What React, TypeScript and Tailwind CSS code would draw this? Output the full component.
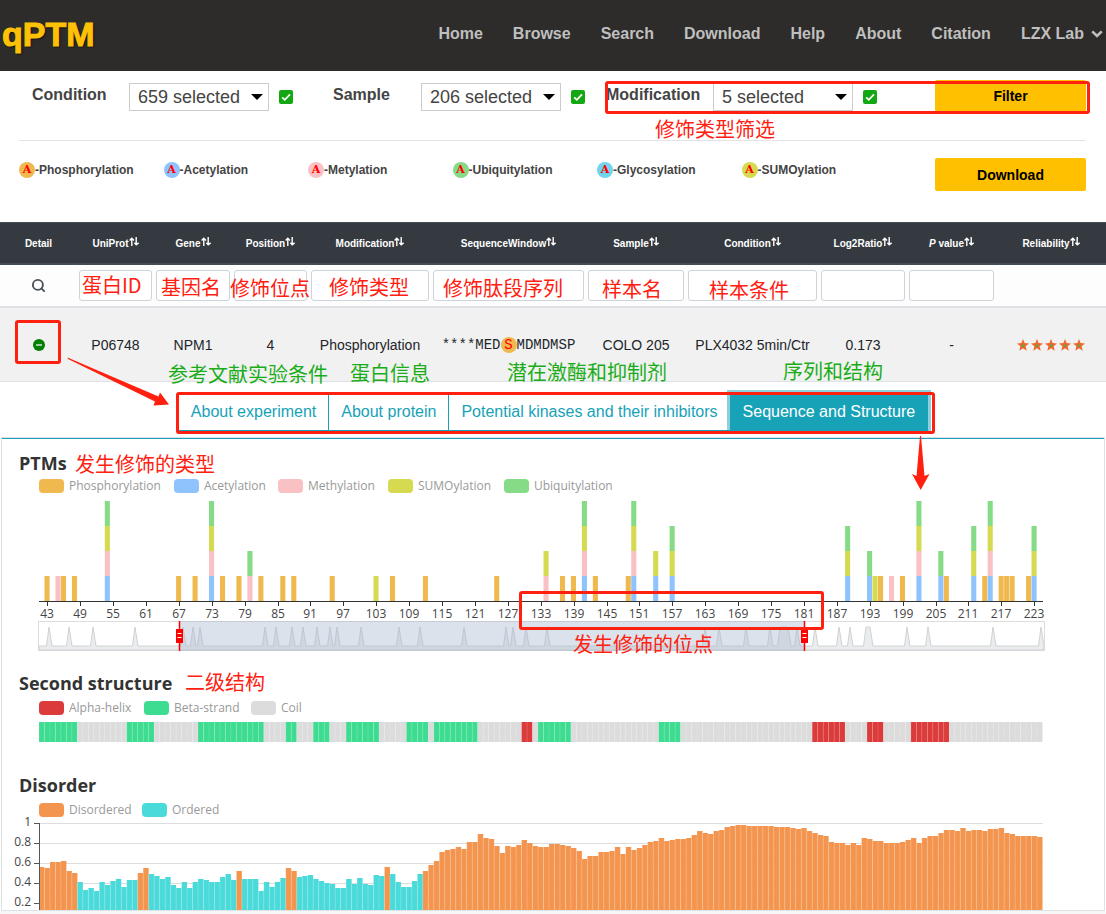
import React, { useState } from "react";
import { Search } from "lucide-react";

const NAV_LINKS = ["Home", "Browse", "Search", "Download", "Help", "About", "Citation"];

const FILTERS = [
    { id: "condition", label: "Condition", value: "659 selected", labelWidth: "w-[97px]" },
    { id: "sample", label: "Sample", value: "206 selected", labelWidth: "w-[88px]" },
    { id: "modification", label: "Modification", value: "5 selected", labelWidth: "w-[107px]" },
];

const BADGES = [
    { name: "Phosphorylation", color: "bg-[#f0b950]" },
    { name: "Acetylation", color: "bg-[#8fc3fd]" },
    { name: "Metylation", color: "bg-[#f9c1c4]" },
    { name: "Ubiquitylation", color: "bg-[#86db87]" },
    { name: "Glycosylation", color: "bg-[#6fd5ee]" },
    { name: "SUMOylation", color: "bg-[#d5da51]" },
];

const COLUMNS = [
    { name: "Detail", width: "w-[77px]", sortable: false, search: false },
    { name: "UniProt", width: "w-[77px]", sortable: true, search: true },
    { name: "Gene", width: "w-[78px]", sortable: true, search: true },
    { name: "Position", width: "w-[77px]", sortable: true, search: true },
    { name: "Modification", width: "w-[122px]", sortable: true, search: true },
    { name: "SequenceWindow", width: "w-[155px]", sortable: true, search: true },
    { name: "Sample", width: "w-[100px]", sortable: true, search: true },
    { name: "Condition", width: "w-[133px]", sortable: true, search: true },
    { name: "Log2Ratio", width: "w-[88px]", sortable: true, search: true },
    { name: "P value", width: "w-[89px]", sortable: true, search: true },
    { name: "Reliability", width: "w-[110px]", sortable: true, search: false },
];

const TABS = ["About experiment", "About protein", "Potential kinases and their inhibitors", "Sequence and Structure"];

const PTM_COLORS: Record<string, string> = {
    P: "#f0b950",
    A: "#8fc3fd",
    M: "#f9c1c4",
    S: "#d5da51",
    U: "#86db87",
};

// residue -> modifications, stacked from the axis upwards
const PTM_SITES: [number, string][] = [
    [43, "P"], [45, "M"], [46, "P"], [48, "P"], [54, "AMSU"], [67, "P"], [70, "P"], [73, "AMSU"],
    [75, "P"], [78, "P"], [80, "MU"], [82, "P"], [86, "P"], [88, "P"], [95, "P"], [103, "S"],
    [106, "P"], [112, "P"], [125, "P"], [134, "MS"], [137, "P"], [139, "P"], [141, "AMSU"],
    [143, "P"], [149, "P"], [150, "AMSU"], [154, "AS"], [157, "ASU"], [189, "ASU"], [193, "AU"],
    [194, "S"], [195, "P"], [197, "M"], [199, "P"], [202, "AMSU"], [206, "AU"], [207, "P"],
    [212, "ASU"], [214, "P"], [215, "AMSU"], [217, "P"], [218, "P"], [219, "P"], [222, "P"], [223, "ASU"],
];

// [center, half width of the flat top] of every peak in the overview strip
const PEAKS: [number, number][] = [
    [10, 0], [30, 0], [54, 0], [96, 0], [144, 0], [154, 0], [161, 0], [226, 0], [237, 0], [253, 0],
    [264, 0], [278, 0], [291, 0], [298, 0], [322, 0], [360, 0], [381, 0], [425, 0], [467, 0], [474, 0],
    [487, 0], [508, 0], [666, 0], [680, 0], [707, 0], [731, 0], [745, 4], [758, 0], [776, 0], [800, 0],
    [811, 0], [829, 2], [868, 0], [889, 0], [954, 0], [1002, 0],
];

// runs of H (helix), E (strand) and C (coil)
const STRUCTURE: [string, number][] = [
    ["E", 7], ["C", 9], ["E", 5], ["C", 8], ["E", 12], ["C", 4], ["E", 2], ["C", 3], ["E", 3], ["C", 3],
    ["E", 6], ["C", 5], ["E", 4], ["C", 1], ["E", 8], ["C", 8], ["H", 2], ["C", 1], ["E", 6], ["C", 16],
    ["E", 4], ["C", 24], ["H", 6], ["C", 4], ["H", 3], ["C", 5], ["H", 7], ["C", 17],
];

const STRUCTURE_COLORS: Record<string, string> = { H: "#dc3b3b", E: "#3ddc91", C: "#dcdcdc" };

const DISORDER = [
    56, 55, 61, 61, 62, 52, 50, 41, 33, 35, 32, 41, 38, 42, 44, 36, 43, 43, 50, 55, 49, 47, 44, 46, 38,
    35, 41, 35, 41, 44, 43, 41, 41, 46, 49, 43, 52, 44, 44, 44, 32, 41, 36, 41, 45, 55, 52, 46, 47, 48,
    44, 42, 40, 39, 35, 35, 44, 39, 45, 39, 38, 48, 47, 56, 49, 41, 36, 36, 42, 49, 52, 58, 62, 71, 73,
    74, 76, 74, 81, 81, 89, 85, 84, 77, 70, 77, 76, 78, 83, 80, 77, 76, 76, 79, 79, 78, 77, 75, 72, 64,
    67, 67, 71, 71, 72, 76, 69, 76, 73, 75, 78, 81, 82, 85, 82, 83, 84, 84, 85, 88, 92, 90, 89, 92, 93,
    96, 97, 98, 98, 97, 97, 97, 97, 97, 96, 96, 96, 95, 94, 95, 92, 90, 88, 87, 81, 80, 80, 78, 80, 78,
    85, 84, 82, 82, 80, 80, 80, 81, 83, 85, 80, 85, 87, 87, 90, 93, 93, 92, 95, 92, 93, 93, 92, 94, 94,
    95, 90, 89, 87, 87, 87, 87, 86,
];

const FIRST = 42;
const COUNT = 183;
const LEFT = 37;
const STEP = 1003.5 / COUNT;

const CHART_FONT = "font-['Open_Sans',sans-serif]";

const SortIcon = () => (
    <svg viewBox="0 0 10 9" className="mb-1 inline-block h-[9px] w-[10px]" fill="none" stroke="#fff" strokeWidth="1.4">
        <path d="M2.8 9V1.2M0.6 3.4L2.8 1.2L5 3.4M7.2 0V7.8M5.4 5.8L7.2 7.8L9.6 5.8" />
    </svg>
);

const Star = () => (
    <svg viewBox="0 0 12 12" className="h-3 w-3">
        <path d="M6 0L7.6 4.1L12 4.4L8.6 7.2L9.7 11.7L6 9.3L2.3 11.7L3.4 7.2L0 4.4L4.4 4.1Z" fill="#f4652c" />
        <path d="M6 4L6.6 5.8L8.4 6L7 7L7.4 8.6L6 7.8L4.6 8.6L5 7L3.6 6L5.4 5.8Z" fill="#6f9f40" />
    </svg>
);

const FilterField = ({ id, label, value, labelWidth }: (typeof FILTERS)[number]) => (
    <div className="flex items-start">
        <label htmlFor={id} className={`${labelWidth} pt-[5px] text-base leading-5 font-bold text-[#444]`}>
            {label}
        </label>
        <div className="relative mt-[3px]">
            <select
                id={id}
                className="h-7 w-[140px] appearance-none border border-[#ccc] bg-white pl-2 text-lg leading-6 text-[#444]"
            >
                <option>{value}</option>
            </select>
            <svg viewBox="0 0 12 6" className="pointer-events-none absolute top-[11px] right-[6px] h-[6px] w-3">
                <path d="M0 0H12L6 6Z" fill="#000" />
            </svg>
        </div>
        <span className="relative mt-[10px] ml-[10px] h-[14px] w-[14px]">
            <input
                type="checkbox"
                defaultChecked
                aria-label={`All ${label}`}
                className="block h-[14px] w-[14px] appearance-none rounded-[2px] bg-[#13a813]"
            />
            <svg viewBox="0 0 14 14" className="pointer-events-none absolute inset-0" fill="none" stroke="#fff" strokeWidth="1.7">
                <path d="M3.2 7.4L5.8 9.8L11 4.4" />
            </svg>
        </span>
    </div>
);

const Legend = ({ items, columns }: { items: [string, string][]; columns: string }) => (
    <ul className={`grid h-[22px] items-center pl-[37px] text-[12px] text-[#999] ${CHART_FONT} ${columns}`}>
        {items.map(([name, color]) => (
            <li key={name} className="flex items-center gap-[5px] whitespace-nowrap">
                <span className={`h-[14px] w-[25px] rounded-[4px] ${color}`} />
                {name}
            </li>
        ))}
    </ul>
);

const PtmChart = () => (
    <svg viewBox="0 0 1102 154" className={`block w-full text-[12px] ${CHART_FONT}`}>
        {PTM_SITES.map(([site, mods]) =>
            mods.split("").map((mod, i) => (
                <rect
                    key={site + mod}
                    x={LEFT + (site - FIRST) * STEP}
                    y={79 - i * 25}
                    width={STEP - 0.4}
                    height="25"
                    fill={PTM_COLORS[mod]}
                />
            ))
        )}
        <path d="M37 104.5H1041" stroke="#333" />
        {Array.from({ length: 31 }, (_, i) => 43 + i * 6).map((site) => {
            const x = Math.round(LEFT + (site - FIRST + 0.5) * STEP);
            return (
                <g key={site}>
                    <path d={`M${x + 0.5} 105V109`} stroke="#333" />
                    <text x={x} y="121" textAnchor="middle" fill="#444">
                        {site}
                    </text>
                </g>
            );
        })}
        <rect x="36.5" y="124.5" width="1006" height="29" fill="#fff" stroke="#ddd" />
        {/* overview of all sites, the selected window is tinted */}
        <path
            d={`M37 149${PEAKS.map(([c, w]) => `L${34 + c + 0.5 - w} 149L${37 + c - w} 130L${37 + c + w} 130L${40 + c + w} 149`).join("")}L1042 149V153H37Z`}
            fill="#ebeced"
            stroke="#cfd3d6"
        />
        <rect x="178" y="124" width="625" height="30" fill="#a7b7cc" fillOpacity="0.4" />
        {[177.5, 802.5].map((x) => (
            <g key={x}>
                <path d={`M${x} 124V154`} stroke="red" strokeWidth="1.5" />
                <rect x={x - 3.5} y="132" width="7" height="14" fill="red" />
                <path d={`M${x - 2} 136.5H${x + 2}M${x - 2} 140.5H${x + 2}`} stroke="#fff" />
            </g>
        ))}
    </svg>
);

const StructureChart = () => {
    const cells = STRUCTURE.flatMap(([kind, n]) => Array.from({ length: n }, () => kind));
    return (
        <svg viewBox="0 0 1102 20" className="block w-full">
            {cells.map((kind, i) => (
                <g key={i}>
                    <rect x={LEFT + i * STEP} width={STEP} height="20" fill={STRUCTURE_COLORS[kind]} />
                    <path d={`M${LEFT + i * STEP} 0V20`} stroke="#fff" strokeOpacity="0.15" />
                </g>
            ))}
        </svg>
    );
};

const DisorderChart = () => (
    <svg viewBox="0 3 1102 89" className={`block w-full overflow-visible text-[12px] ${CHART_FONT}`}>
        {["1", "0.8", "0.6", "0.4", "0.2"].map((label, i) => (
            <g key={label}>
                <path d={`M37 ${5.5 + i * 20}H1041`} stroke="#ddd" />
                <path d={`M32 ${5.5 + i * 20}H37`} stroke="#555" />
                <text x="29" y={8 + i * 20} textAnchor="end" fill="#444">
                    {label}
                </text>
            </g>
        ))}
        {DISORDER.map((value, i) => (
            <g key={i}>
                <rect
                    x={LEFT + i * STEP}
                    y={105 - value}
                    width={STEP}
                    height={value - 13}
                    fill={value >= 50 ? "#f4954f" : "#4bdada"}
                />
                <path d={`M${LEFT + i * STEP} ${105 - value}V92`} stroke="#fff" strokeOpacity="0.18" />
            </g>
        ))}
        <path d="M37.5 5V92" stroke="#555" />
    </svg>
);

const NOTES = [
    { text: "修饰类型筛选", place: "top-[114px] left-[655px] text-[#ff2010]" },
    { text: "蛋白ID", place: "top-[270px] left-[82px] text-[#ff2010]" },
    { text: "基因名", place: "top-[272px] left-[161px] text-[#ff2010]" },
    { text: "修饰位点", place: "top-[273px] left-[230px] text-[#ff2010]" },
    { text: "修饰类型", place: "top-[272px] left-[329px] text-[#ff2010]" },
    { text: "修饰肽段序列", place: "top-[273px] left-[443px] text-[#ff2010]" },
    { text: "样本名", place: "top-[274px] left-[602px] text-[#ff2010]" },
    { text: "样本条件", place: "top-[275px] left-[709px] text-[#ff2010]" },
    { text: "参考文献实验条件", place: "top-[359px] left-[168px] text-[#1aad19]" },
    { text: "蛋白信息", place: "top-[358px] left-[350px] text-[#1aad19]" },
    { text: "潜在激酶和抑制剂", place: "top-[357px] left-[507px] text-[#1aad19]" },
    { text: "序列和结构", place: "top-[356px] left-[783px] text-[#1aad19]" },
    { text: "发生修饰的类型", place: "top-[449px] left-[75px] text-[#ff2010]" },
    { text: "发生修饰的位点", place: "top-[629px] left-[573px] text-[#ff2010]" },
    { text: "二级结构", place: "top-[667px] left-[185px] text-[#ff2010]" },
];

const FRAMES = [
    "top-[81px] left-[605px] h-[33px] w-[485px]",
    "top-[320px] left-[15px] h-[44px] w-[46px]",
    "top-[392px] left-[176px] h-[42px] w-[759px]",
    "top-[591px] left-[519px] h-[39px] w-[305px]",
];

// Notes, frames and arrows drawn on top of the page
const Annotations = () => (
    <div className="pointer-events-none absolute inset-0">
        {FRAMES.map((place) => (
            <div key={place} className={`absolute rounded-[3px] border-3 border-[#ff2010] ${place}`} />
        ))}
        {NOTES.map((note) => (
            <p
                key={note.text}
                className={`absolute font-['Noto_Sans_CJK_SC',sans-serif] text-[20px] leading-[30px] whitespace-nowrap ${note.place}`}
            >
                {note.text}
            </p>
        ))}
        <svg viewBox="0 0 102 50" className="absolute top-[357px] left-[67px] h-[50px] w-[102px]" fill="#ff2010">
            <path d="M0.5 0.5L1 2L88 44.5L86.5 48.5L102 47.5L93 35.5L91.5 39.5Z" />
        </svg>
        <svg viewBox="0 0 18 54" className="absolute top-[436px] left-[912px] h-[54px] w-[18px]" fill="#ff2010">
            <path d="M8 0H9L12.5 40L17.5 38L8.7 54L0 38L4.5 40Z" />
        </svg>
    </div>
);

const App: React.FC = () => {
    const [activeTab, setActiveTab] = useState(3);

    return (
        <div className="relative min-h-screen bg-[#f7f7f7] font-['Liberation_Sans',Arial,sans-serif] text-[#212529]">
            <header className="flex h-[71px] items-center justify-between bg-[#2d2c2a] pr-[3px] pb-1">
                <a
                    href="#"
                    className="pl-[2px] text-[34px] leading-10 font-bold text-[#ffc107] [-webkit-text-stroke:1px_#ffc107] [text-shadow:1px_1px_2px_#000]"
                >
                    qPTM
                </a>
                <nav className="flex items-center gap-[30px] text-base font-bold text-[#bfbfbf]">
                    {NAV_LINKS.map((link) => (
                        <a key={link} href="#">
                            {link}
                        </a>
                    ))}
                    <a href="#" className="flex items-center gap-[7px]">
                        LZX Lab
                        <svg viewBox="0 0 12 8" className="h-2 w-3" fill="none" stroke="currentColor" strokeWidth="2.6">
                            <path d="M1.2 1.4L6 6L10.8 1.4" />
                        </svg>
                    </a>
                </nav>
            </header>

            <section className="h-[151px] bg-white pr-5">
                <form className="grid h-[69px] grid-cols-[301px_273px_1fr_151px] items-start pt-[9px] pl-8">
                    {FILTERS.map((filter) => (
                        <FilterField key={filter.id} {...filter} />
                    ))}
                    <button type="button" className="h-8 rounded-[2px] bg-[#ffc000] text-sm font-bold text-black">
                        Filter
                    </button>
                </form>
                <div className="ml-[19px] flex items-start justify-between border-t border-[#e3e3e3] pt-[17px]">
                    <ul className="grid w-[867px] grid-cols-6 text-xs font-bold text-[#444]">
                        {BADGES.map((badge) => (
                            <li key={badge.name} className="flex h-6 items-center">
                                <span
                                    className={`flex h-4 w-4 items-center justify-center rounded-full font-['DejaVu_Serif',serif] text-[11px] leading-4 text-[red] ${badge.color}`}
                                >
                                    A
                                </span>
                                -{badge.name}
                            </li>
                        ))}
                    </ul>
                    <button type="button" className="h-[33px] w-[151px] rounded-[2px] bg-[#ffc000] text-sm font-bold text-black">
                        Download
                    </button>
                </div>
            </section>

            <table className="w-full table-fixed border-separate border-spacing-0 bg-white text-center">
                <thead>
                    <tr className="bg-[#343a40] text-[10px] text-white">
                        {COLUMNS.map((column) => (
                            <th
                                key={column.name}
                                className={`${column.width} h-[43px] border-t border-b-2 border-[#454d55] p-0 whitespace-nowrap`}
                            >
                                {column.name === "P value" ? (
                                    <>
                                        <i>P</i> value
                                    </>
                                ) : (
                                    column.name
                                )}
                                {column.sortable && <SortIcon />}
                            </th>
                        ))}
                    </tr>
                </thead>
                <tbody>
                    <tr className="bg-[#fdfdfd]">
                        {COLUMNS.map((column) => (
                            <td key={column.name} className="h-[43px] border-b-2 border-[#dee2e6] p-0 px-[2px]">
                                {column.name === "Detail" && <Search size={15} strokeWidth={3} className="mx-auto text-[#495057]" />}
                                {column.search && (
                                    <input
                                        type="text"
                                        aria-label={column.name}
                                        className="block h-[31px] w-full rounded-[3px] border border-[#ced4da] bg-white px-2 text-sm"
                                    />
                                )}
                            </td>
                        ))}
                    </tr>
                    <tr className="bg-[#f1f1f1] text-sm whitespace-nowrap *:border-b *:border-[#dee2e6] *:p-0">
                        <td className="h-[74px]">
                            <button type="button" aria-label="Hide details" className="block w-full">
                                <svg viewBox="0 0 12 12" className="mx-auto h-3 w-3">
                                    <circle cx="6" cy="6" r="6" fill="#008000" />
                                    <path d="M3 6H9" stroke="#b5d6b5" strokeWidth="1.8" />
                                </svg>
                            </button>
                        </td>
                        <td>P06748</td>
                        <td>NPM1</td>
                        <td>4</td>
                        <td>Phosphorylation</td>
                        <td>
                            <div className="flex items-center justify-center font-['Liberation_Mono',monospace]">
                                ****MED
                                <span className="flex h-4 w-4 items-center justify-center rounded-full bg-[#f0b950] text-[red]">S</span>
                                MDMDMSP
                            </div>
                        </td>
                        <td>COLO 205</td>
                        <td>PLX4032 5min/Ctr</td>
                        <td>0.173</td>
                        <td>-</td>
                        <td>
                            <div className="flex justify-center gap-[2px]">
                                {[1, 2, 3, 4, 5].map((n) => (
                                    <Star key={n} />
                                ))}
                            </div>
                        </td>
                    </tr>
                    <tr>
                        <td colSpan={11} className="p-0 px-px text-left">
                            <div className="flex justify-center pt-[11px] pb-[6px]">
                                {TABS.map((tab, i) => (
                                    <button
                                        key={tab}
                                        type="button"
                                        onClick={() => setActiveTab(i)}
                                        className={
                                            i === activeTab
                                                ? "h-[38px] border border-[#17a2b8] bg-[#17a2b8] px-3 text-base text-white ring-3 ring-[#17a2b8]/50"
                                                : "-mr-px h-[38px] border border-[#17a2b8] bg-white px-3 text-base text-[#17a2b8]"
                                        }
                                    >
                                        {tab}
                                    </button>
                                ))}
                            </div>
                            <div className="border border-[#dee2e6]">
                                <div className="border-t border-[#17a2b8] pt-3">
                                    <h2 className={`pl-[17px] text-[18px] leading-6 font-bold text-[#333] ${CHART_FONT}`}>PTMs</h2>
                                    <Legend
                                        columns="grid-cols-[135px_104px_110px_116px_1fr]"
                                        items={[
                                            ["Phosphorylation", "bg-[#f0b950]"],
                                            ["Acetylation", "bg-[#8fc3fd]"],
                                            ["Methylation", "bg-[#f9c1c4]"],
                                            ["SUMOylation", "bg-[#d5da51]"],
                                            ["Ubiquitylation", "bg-[#86db87]"],
                                        ]}
                                    />
                                    <PtmChart />
                                    <h2 className={`mt-5 mb-[2px] pl-[17px] text-[18px] leading-6 font-bold text-[#333] ${CHART_FONT}`}>
                                        Second structure
                                    </h2>
                                    <Legend
                                        columns="grid-cols-[105px_107px_1fr]"
                                        items={[
                                            ["Alpha-helix", "bg-[#dc3b3b]"],
                                            ["Beta-strand", "bg-[#3ddc91]"],
                                            ["Coil", "bg-[#dcdcdc]"],
                                        ]}
                                    />
                                    <div className="pt-[3px]">
                                        <StructureChart />
                                    </div>
                                    <h2 className={`mt-[31px] mb-[2px] pl-[17px] text-[18px] leading-6 font-bold text-[#333] ${CHART_FONT}`}>
                                        Disorder
                                    </h2>
                                    <Legend
                                        columns="grid-cols-[103px_1fr]"
                                        items={[
                                            ["Disordered", "bg-[#f4954f]"],
                                            ["Ordered", "bg-[#4bdada]"],
                                        ]}
                                    />
                                    <DisorderChart />
                                </div>
                            </div>
                        </td>
                    </tr>
                </tbody>
            </table>

            <Annotations />
        </div>
    );
};

export default App;
